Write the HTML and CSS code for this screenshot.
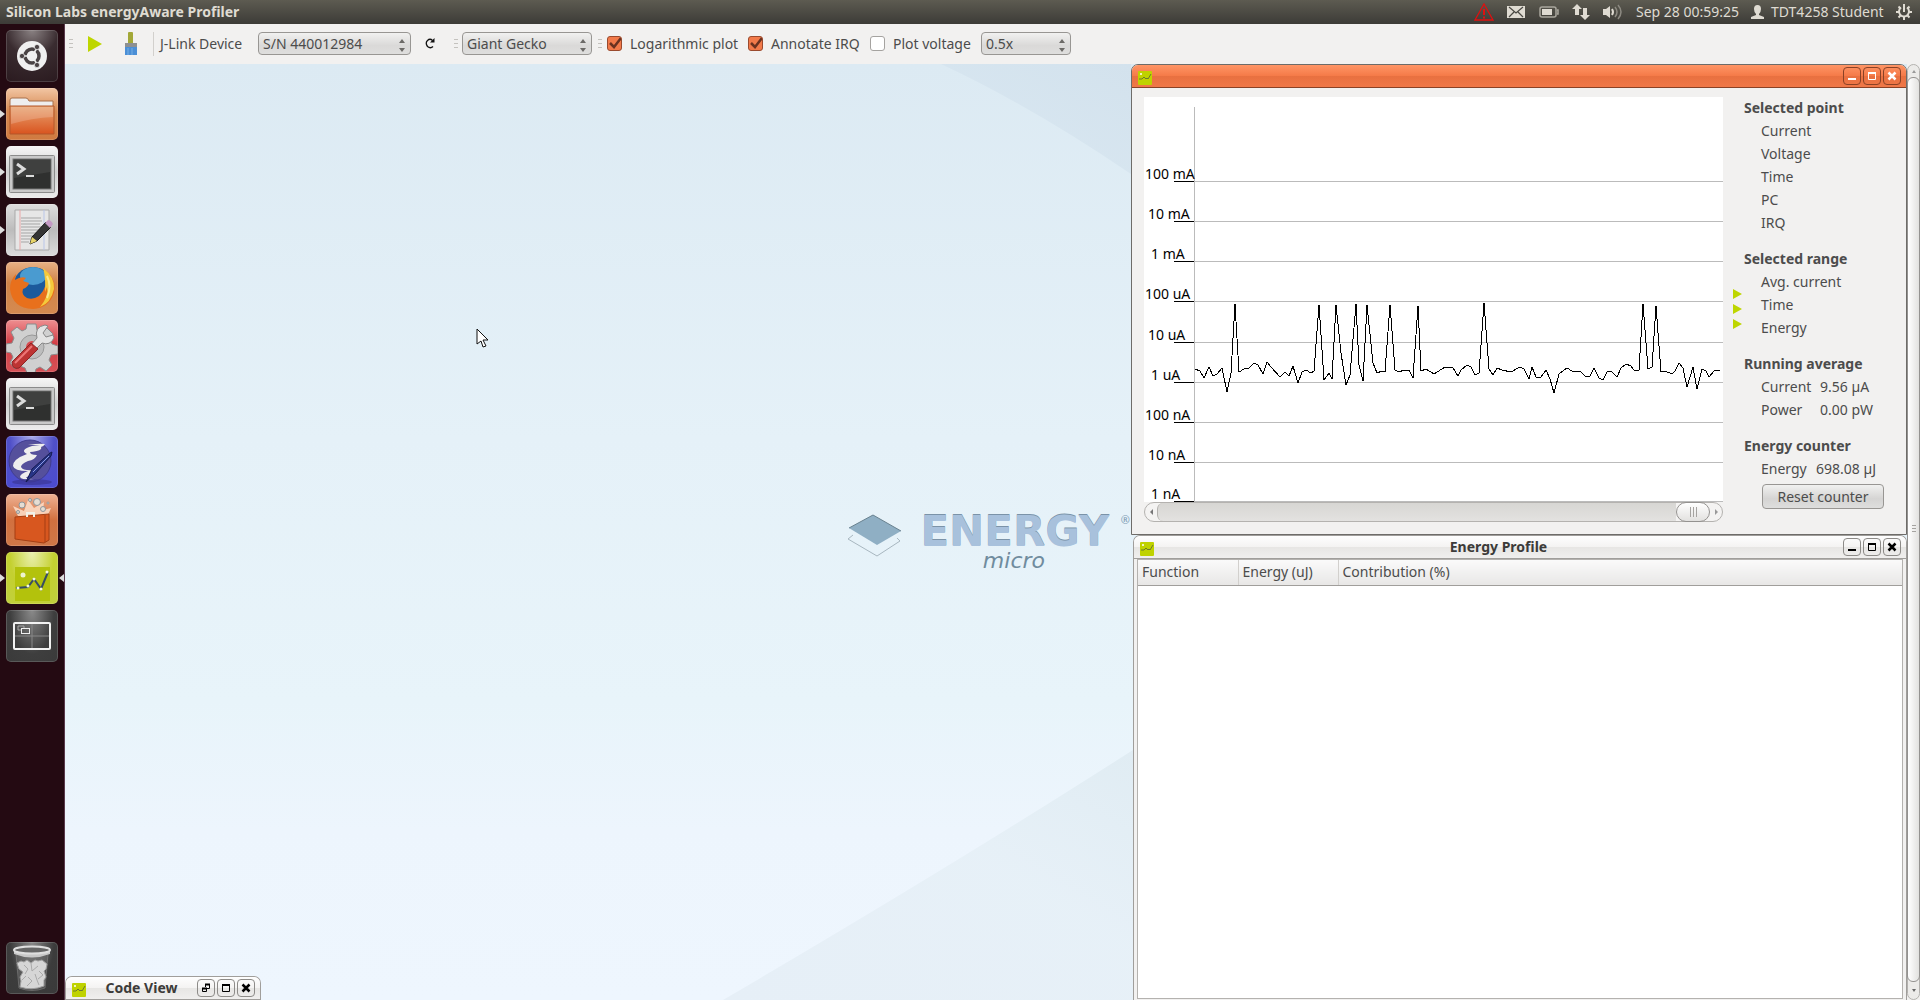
FILE: index.html
```html
<!DOCTYPE html>
<html lang="en">
<head>
<meta charset="utf-8">
<title>Silicon Labs energyAware Profiler</title>
<link rel="stylesheet" href="styles.css">
</head>
<body>
<svg class="defs" aria-hidden="true">
  <defs>
    <symbol id="app" viewBox="0 0 14 14">
      <rect width="14" height="14" rx="1" fill="#bfd200"/>
      <path d="M1 8h3l2-2 2 2 1-1 1 1 3-5" fill="none" stroke="#6b7a30"/>
      <circle cx="3" cy="3" r="1" fill="#fff"/>
    </symbol>
    <symbol id="min" viewBox="0 0 18 18"><path d="M5 12h8" stroke="currentColor" stroke-width="2"/></symbol>
    <symbol id="max" viewBox="0 0 18 18"><path d="M5 6h8" stroke="currentColor" stroke-width="2"/><path d="M5.500 5.500h7v7h-7z" fill="none" stroke="currentColor"/></symbol>
    <symbol id="restore" viewBox="0 0 18 18"><path d="M8 5.500h5M5 9.500h5" stroke="currentColor" stroke-width="2"/><path d="M8.500 8V5.500h4v4H10M5.500 9.500h4v3h-4z" fill="none" stroke="currentColor"/></symbol>
    <symbol id="close" viewBox="0 0 18 18"><path d="M5.500 5.500l7 7M12.500 5.500l-7 7" stroke="currentColor" stroke-width="2.500"/></symbol>
    <symbol id="updown" viewBox="0 0 6 13"><path d="M3 0l3 4H0zM3 13l3-4H0z" fill="#6c6a67"/></symbol>
    <linearGradient id="orange" x1="0" y1="0" x2="0" y2="1"><stop offset="0" stop-color="#e8a472"/><stop offset="1" stop-color="#d9541f"/></linearGradient>
    <symbol id="terminal" viewBox="0 0 52 52">
      <rect x="3.500" y="9.500" width="45" height="37" rx="1" fill="#c9c9c9" stroke="#8b8b8b"/>
      <rect x="7" y="13" width="38" height="30" fill="#2f302f" stroke="#777"/>
      <path d="M8 14h36v12L8 32z" fill="#fff" opacity=".08"/>
      <path d="M11 18l7 5-7 5" fill="none" stroke="#dcdcdc" stroke-width="3"/><path d="M20 30h8" stroke="#dcdcdc" stroke-width="2"/>
    </symbol>
    <symbol id="gear" viewBox="0 0 16 16">
      <path d="M5 3.500a5 5 0 1 0 6 0" fill="none" stroke="#dfdbd2" stroke-width="2"/>
      <path d="M8 0v8M2.500 2.500l2 2M13.500 2.500l-2 2M0 8h3M13 8h3M2.500 13.500l2-2M13.500 13.500l-2-2M8 13v3" stroke="#dfdbd2" stroke-width="2"/>
    </symbol>
  </defs>
</svg>

<header class="panel">
  <h1 class="panel-title">Silicon Labs energyAware Profiler</h1>
  <div class="indicators">
    <svg class="i-warn" width="20" height="18" viewBox="0 0 20 18"><path d="M10 1l9 16H1z" fill="none" stroke="#e01010" stroke-width="1.300"/><path d="M10 6v6M10 13.500v2" stroke="#e01010" stroke-width="2"/></svg>
    <svg class="i-mail" width="18" height="12" viewBox="0 0 18 12"><rect width="18" height="12" fill="#dfdbd2"/><path d="M2 1l7 6 7-6M2 11l5-5M16 11l-5-5" fill="none" stroke="#4a4943" stroke-width="1.200"/></svg>
    <svg class="i-batt" width="20" height="12" viewBox="0 0 20 12"><rect x="1" y="1" width="16" height="10" rx="2" fill="none" stroke="#a9a69d" stroke-width="1.500"/><rect x="3" y="3" width="10" height="6" fill="#dfdbd2"/><path d="M18 4h1v4h-1" fill="none" stroke="#a9a69d" stroke-width="1.500"/></svg>
    <svg class="i-net" width="18" height="18" viewBox="0 0 18 18"><path d="M5 1l5 5H7v6H3V6H0zM13 17l5-5h-3V5h-4v7H8z" fill="#dfdbd2"/></svg>
    <svg class="i-snd" width="20" height="18" viewBox="0 0 20 18"><path d="M0 6h3l4-3v12l-4-3H0z" fill="#dfdbd2"/><path d="M9 6q2 3 0 6" fill="none" stroke="#dfdbd2" stroke-width="2"/><path d="M12 4q4 5 0 10M15 2q6 7 0 14" fill="none" stroke="#8d8a82" stroke-width="1.500"/></svg>
    <time class="clock">Sep 28 00:59:25</time>
    <svg class="i-user" width="13" height="14" viewBox="0 0 13 14"><path d="M3 4q0-4 3.500-4T10 4q0 3-2 5v1l5 2v2H0v-2l5-2V9Q3 7 3 4z" fill="#dfdbd2"/></svg>
    <span class="user">TDT4258 Student</span>
    <svg width="16" height="16"><use href="#gear"/></svg>
  </div>
</header>

<div class="screen">
  <nav class="launcher" aria-label="Launcher">
    <a class="tile dash" href="#dash" aria-label="Dash"><svg viewBox="0 0 52 52"><circle cx="26" cy="26" r="15" fill="#f0f0f0"/><circle cx="26" cy="26" r="7" fill="none" stroke="#4a4345" stroke-width="3.500"/><path d="M26 26L17 26M26 26l5-8M26 26l5 8" stroke="#f0f0f0" stroke-width="1.500"/><g fill="#4a4345" stroke="#f0f0f0" stroke-width=".7"><circle cx="16" cy="26" r="2.600"/><circle cx="31" cy="17" r="2.600"/><circle cx="31" cy="35" r="2.600"/></g></svg></a>
    <a class="tile files running" href="#files" aria-label="Files"><svg viewBox="0 0 52 52"><path d="M4 19v-7q0-2 2-2h14q2 0 3 3h24v7z" fill="#eee" stroke="#a8714c"/><path d="M4 18h44v28H4z" fill="url(#orange)" stroke="#b3562a"/><path d="M5 19h42v10Q26 30 5 36z" fill="#fff" opacity=".18"/></svg></a>
    <a class="tile term running" href="#terminal-one" aria-label="Terminal"><svg><use href="#terminal"/></svg></a>
    <a class="tile edit running" href="#editor" aria-label="Text editor"><svg viewBox="0 0 52 52"><path d="M9 6h34v40H9z" fill="#e6e6e6" stroke="#a9a9a9"/><path d="M14 6v40" stroke="#e9a8a8"/><path d="M38 6v40" stroke="#b9c6e9"/><path d="M15 14h20M15 17h21M15 20h19M15 23h21M15 26h19M15 29h15M15 32h14M15 35h12M15 38h8" stroke="#a5a5a5"/><path d="M24 40l2-7L40 18l5 5-14 14z" fill="#343434" stroke="#151515"/><path d="M24 40l2-7 5 4z" fill="#e7d469"/><path d="M39 19l3-3q3 0 5 4l-3 4z" fill="#c49ac4"/></svg></a>
    <a class="tile fox" href="#firefox" aria-label="Firefox"><svg viewBox="0 0 52 52"><circle cx="27" cy="25" r="20" fill="#1c5a9c"/><ellipse cx="27" cy="14" rx="13" ry="9" fill="#4a9bd0"/><path d="M40 9q11 9 8 22-5 15-21 16Q6 46 4 27q0-9 6-15l-1 6q6-4 11-2l-3 3 6 2q-1 4-6 6-2 6 4 9 6 2 12-2 9-8 7-25z" fill="#e8701c"/><path d="M37 6q12 9 11 21-3 14-14 18 9-11 7-20l-2 5q1-14-2-24z" fill="#f4c93c"/><path d="M41 14q5 10 0 22" fill="none" stroke="#fbe98b" stroke-width="2"/></svg></a>
    <a class="tile settings" href="#settings" aria-label="System settings"><svg viewBox="0 0 52 52"><path d="M21 4h9l1 6 5 2 5-4 6 6-3 6 2 4 6 2v8l-7 1-2 5 3 5-6 6-6-4-4 2-1 4h-8l-2-5-5-2-5 3-5-6 3-6-2-4-5-1v-8l6-1 2-5-3-6 6-5 5 4 4-2z" fill="#d0d0d0" stroke="#8c8c8c"/><circle cx="26" cy="27" r="12" fill="#bdbdbd" stroke="#999"/><circle cx="26" cy="27" r="6" fill="#d94a50"/><path d="M24 26l7-8q-3-11 8-13l3 1-5 7 3 4 7-2 1 3q-4 8-12 5l-8 8z" fill="#e3e3e3" stroke="#888"/><path d="M6 42l19-19 7 6-19 19q-7 2-7-6z" fill="#bd3433" stroke="#8e2424"/><path d="M9 43l17-17" stroke="#e77" stroke-width="2"/></svg></a>
    <a class="tile term" href="#terminal-two" aria-label="Terminal"><svg><use href="#terminal"/></svg></a>
    <a class="tile emacs" href="#emacs" aria-label="Emacs"><svg viewBox="0 0 52 52"><circle cx="24" cy="25" r="21" fill="#55509c" stroke="#403c91"/><path d="M22 9q12-2 17-1-2 3-4 3 2 4-11 5 0 3 7 3-2 5-9 6-7 3-7 6 2 4 13 3l3 1-8 5q-6 2 0 2l5 2q-13 0-14-3 0-3 8-6-14 0-15-5 0-7 14-12-8-4 5-8l8-1z" fill="#eee"/><ellipse cx="26" cy="46" rx="20" ry="3" fill="#3a3697" opacity=".7"/><path d="M20 46l6-13L44 17l2-1-1 4-16 18z" fill="#273486" stroke="#151b50"/><path d="M27 36L43 20" stroke="#8c9be0"/></svg></a>
    <a class="tile shop" href="#software" aria-label="Software centre"><svg viewBox="0 0 52 52"><path d="M12 22L7 12l11 5 4-11 6 8 10-6-1 8 8-2-4 9z" fill="#ffe3d0" opacity=".8"/><g fill="#e5ddd3" stroke="#8f979c"><circle cx="16" cy="11" r="3"/><circle cx="31" cy="8" r="3.500"/><circle cx="24" cy="6" r="1.500"/><circle cx="37" cy="15" r="2.500"/><circle cx="12" cy="18" r="1.500"/><circle cx="42" cy="9" r="1"/></g><path d="M9 23l34-3v26l-5 3-29-4z" fill="#d8571f" stroke="#a53f14"/><path d="M39 21v27" stroke="#a53f14"/><path d="M21 23v-4h7v4" fill="none" stroke="#f0f0e8" stroke-width="2"/></svg></a>
    <a class="tile prof running active" href="#profiler" aria-label="energyAware Profiler" aria-current="page"><svg viewBox="0 0 52 52"><rect x="9" y="15" width="35" height="34" fill="#b3c20c"/><circle cx="17" cy="23" r="2.500" fill="#eef3d0"/><path d="M10 36l12-1 6-8 7 10 7-17" fill="none" stroke="#374d63" stroke-width="2"/><g fill="#f4f8dc"><circle cx="12" cy="36" r="1.500"/><circle cx="22" cy="34" r="1.500"/><circle cx="28" cy="27" r="1.500"/><circle cx="35" cy="37" r="1.500"/><circle cx="41" cy="20" r="1.500"/></g></svg></a>
    <a class="tile work" href="#workspaces" aria-label="Workspace switcher"><svg viewBox="0 0 52 52"><path d="M26 13v26M8 26h36" stroke="#888"/><rect x="8" y="13" width="36" height="26" rx="1" fill="none" stroke="#f2f2f2" stroke-width="2"/><path d="M15 20h-3v-4h6v2" fill="none" stroke="#aaa"/><rect x="15.500" y="18.500" width="8" height="5" fill="none" stroke="#eee"/></svg></a>
    <a class="tile trash" href="#trash" aria-label="Rubbish bin"><svg viewBox="0 0 52 52"><path d="M10 12l3 34q13 5 26 0l3-34z" fill="#777" opacity=".4" stroke="#aaa"/><path d="M11 21l4-2 3 1 3-2 4 3 4-3 3 1 4-1 5 4-1 5-2 2 2 6-2 3v6q-12 5-24 1l1-6-1-4 3-5-4-3z" fill="#d6d6d6" stroke="#9f9f9f"/><path d="M18 23l4 4-3 5M25 21l1 8 6-5M33 29l4 4-5 4M22 35l4 4-5 5M29 32l2 6 2 5M16 38l4-4" fill="none" stroke="#aaa"/><path d="M8 7v5q18 7 36 0V7z" fill="#c8c8c8"/><ellipse cx="26" cy="8" rx="18" ry="3.500" fill="#666" stroke="#dedede" stroke-width="2"/></svg></a>
  </nav>

  <main class="workspace">
    <form class="toolbar">
      <i class="grip"></i>
      <button class="tool play" type="button" aria-label="Start"><svg width="14" height="16" viewBox="0 0 14 16"><path d="M0 0l14 8-14 8z" fill="#bed600"/></svg></button>
      <button class="tool brush" type="button" aria-label="Clear"><svg width="14" height="24" viewBox="0 0 14 24"><rect x="4" width="5" height="12" rx="1" fill="#a3a838"/><rect x="1" y="11" width="12" height="4" fill="#8d9092"/><path d="M1 15h12v8H1z" fill="#4b8fd6"/><path d="M4 16v7M8 16v7" stroke="#76aee4"/></svg></button>
      <i class="divider"></i>
      <label class="device" for="serial">J-Link Device</label>
      <span class="combo combo-serial"><select id="serial"><option>S/N 440012984</option></select><svg><use href="#updown"/></svg></span>
      <button class="tool refresh" type="button" aria-label="Refresh"><svg width="10" height="11" viewBox="0 0 10 11"><path d="M7.500 2.500Q5 0 2.500 2.500T2.500 8.500q3 2.500 5.500 0" fill="none" stroke="#111" stroke-width="1.300"/><path d="M9.500 0v4.500H5z" fill="#111"/></svg></button>
      <i class="grip"></i>
      <span class="combo combo-chip"><select aria-label="Chip"><option>Giant Gecko</option></select><svg><use href="#updown"/></svg></span>
      <i class="grip grip-wide"></i>
      <label class="check check-log"><input type="checkbox" checked>Logarithmic plot</label>
      <label class="check check-irq"><input type="checkbox" checked>Annotate IRQ</label>
      <label class="check check-volt"><input type="checkbox">Plot voltage</label>
      <span class="combo combo-zoom"><select aria-label="Voltage scale"><option>0.5x</option></select><svg><use href="#updown"/></svg></span>
    </form>

    <div class="mdi">
      <div class="desk">
        <svg class="shape shape-top" viewBox="0 0 190 110" preserveAspectRatio="none"><defs><linearGradient id="st" x1="0" x2="1" y1="1" y2="0"><stop offset="0" stop-color="#d5e4ef" stop-opacity=".5"/><stop offset="1" stop-color="#d3e2ed"/></linearGradient></defs><path d="M0 0h190v110Q90 42 0 0z" fill="url(#st)"/></svg>
        <svg class="shape shape-bottom" viewBox="0 0 410 260" preserveAspectRatio="none"><defs><linearGradient id="sb" x1="0" y1="1" x2="1" y2="0"><stop offset="0" stop-color="#e6eff7"/><stop offset=".6" stop-color="#e5eff6" stop-opacity=".8"/><stop offset="1" stop-color="#e0ecf3"/></linearGradient></defs><path d="M410 0v260H0Q230 120 410 0z" fill="url(#sb)"/></svg>
        <div class="brand">
          <svg class="brand-mark" width="54" height="44" viewBox="0 0 54 44"><path d="M6 21l-5 4 29 17 23-15-3-3" fill="none" stroke="#a8b7c0"/><path d="M26 1l28 16-24 14L2 14z" fill="#8fafc4"/><path d="M2 14L26 1l28 16" fill="none" stroke="#68818f"/></svg>
          <div class="brand-text"><span class="brand-name">ENERGY</span><span class="brand-sub">micro</span></div>
          <span class="brand-reg">®</span>
        </div>

        <section class="win win-code">
          <header class="bar"><svg class="bar-icon"><use href="#app"/></svg><h2>Code View</h2>
            <button type="button" aria-label="Restore"><svg><use href="#restore"/></svg></button><button type="button" aria-label="Maximise"><svg><use href="#max"/></svg></button><button type="button" aria-label="Close"><svg><use href="#close"/></svg></button></header>
        </section>

        <section class="win win-plot">
          <header class="bar"><svg class="bar-icon"><use href="#app"/></svg><h2></h2>
            <button type="button" aria-label="Minimise"><svg><use href="#min"/></svg></button><button type="button" aria-label="Maximise"><svg><use href="#max"/></svg></button><button type="button" aria-label="Close"><svg><use href="#close"/></svg></button></header>
          <div class="plot-body">
            <div class="plot-col">
              <svg class="plot" viewBox="1144 97 579 405">
                <g shape-rendering="crispEdges" fill="none">
                  <path d="M1194 181.500h529M1194 221.500h529M1194 261.500h529M1194 301.500h529M1194 342.500h529M1194 382.500h529M1194 422.500h529M1194 462.500h529M1194 501.500h529M1194.500 107v394" stroke="#bbb"/>
                  <path d="M1174 181.500h20M1174 221.500h20M1174 261.500h20M1174 301.500h20M1174 342.500h20M1174 382.500h20M1174 422.500h20M1174 462.500h20M1174 501.500h20" stroke="#000"/>
                  <polyline stroke="#000" points="1195,369 1200,371 1204,378 1209,367 1213,376 1217,374 1222,368 1227,392 1231,373 1235,304 1239,372 1244,369 1249,368 1254,363 1258,365 1263,374 1267,362 1271,367 1280,377 1285,372 1289,376 1293,366 1298,383 1302,372 1306,370 1311,373 1314,371 1319,305 1324,380 1329,373 1332,379 1336,305 1341,353 1346,385 1350,375 1356,304 1359,365 1363,381 1367,305 1373,363 1377,373 1382,371 1385,372 1390,305 1395,370 1399,372 1404,370 1409,370 1413,378 1418,306 1421,371 1426,369 1434,374 1445,367 1453,368 1458,376 1461,370 1467,365 1471,367 1475,375 1479,373 1484,303 1489,369 1493,375 1497,368 1502,370 1511,372 1520,367 1524,369 1529,379 1532,367 1536,377 1541,377 1546,370 1550,379 1554,393 1559,374 1567,368 1572,371 1581,372 1586,377 1590,376 1594,368 1599,378 1603,380 1607,372 1611,371 1617,377 1621,368 1626,364 1631,366 1634,370 1639,370 1643,304 1648,369 1652,367 1656,306 1661,372 1665,371 1672,374 1675,371 1679,363 1683,368 1687,387 1693,367 1697,389 1702,369 1706,371 1709,377 1714,371 1720,370"/>
                </g>
                <g class="ticks">
                  <text x="1145" y="179">100 mA</text><text x="1148" y="219">10 mA</text><text x="1151" y="259">1 mA</text>
                  <text x="1145" y="299">100 uA</text><text x="1148" y="340">10 uA</text><text x="1151" y="380">1 uA</text>
                  <text x="1145" y="420">100 nA</text><text x="1148" y="460">10 nA</text><text x="1151" y="499">1 nA</text>
                </g>
              </svg>
              <div class="hscroll"><span class="arrow left"></span><span class="groove"></span><span class="thumb"><i></i></span><span class="arrow right"></span></div>
            </div>
            <div class="markers"><svg viewBox="0 0 9 40"><path d="M0 0l9 5-9 5zM0 15l9 5-9 5zM0 30l9 5-9 5z" fill="#bed600"/></svg></div>
            <aside class="stats">
              <section><h3>Selected point</h3><p>Current</p><p>Voltage</p><p>Time</p><p>PC</p><p>IRQ</p></section>
              <section><h3>Selected range</h3><p>Avg. current</p><p>Time</p><p>Energy</p></section>
              <section><h3>Running average</h3><p><span class="key">Current</span>9.56 µA</p><p><span class="key">Power</span>0.00 pW</p></section>
              <section><h3>Energy counter</h3><p><span class="key key-short">Energy</span>698.08 µJ</p><button class="reset" type="button">Reset counter</button></section>
            </aside>
          </div>
        </section>

        <section class="win win-profile">
          <header class="bar"><svg class="bar-icon"><use href="#app"/></svg><h2>Energy Profile</h2>
            <button type="button" aria-label="Minimise"><svg><use href="#min"/></svg></button><button type="button" aria-label="Maximise"><svg><use href="#max"/></svg></button><button type="button" aria-label="Close"><svg><use href="#close"/></svg></button></header>
          <div class="table-box">
            <table><thead><tr><th scope="col">Function</th><th scope="col">Energy (uJ)</th><th scope="col">Contribution (%)</th></tr></thead><tbody></tbody></table>
          </div>
        </section>

        <svg class="cursor" width="13" height="20" viewBox="0 0 13 20"><path d="M1 1v15l4-3 2 6 3-1-3-6h5z" fill="#fff" stroke="#111"/></svg>
      </div>
      <div class="vscroll"><span class="v-up"></span><span class="v-thumb"><i></i></span><span class="v-down"></span></div>
    </div>
  </main>
</div>
</body>
</html>
```
FILE: styles.css
```css
* { box-sizing: border-box; }
html, body { height: 100%; }
body {
  margin: 0;
  display: flex;
  flex-direction: column;
  overflow: hidden;
  font: 14px/20px "Noto Sans", "Open Sans", sans-serif;
  color: #4c4c4c;
  background: #f2f1f0;
}
h1, h2, h3, p { margin: 0; font-size: inherit; }
h1, h2, h3 { font-weight: 700; }
button { padding: 0; border: 0; background: none; font: inherit; color: inherit; }
svg { display: block; flex: none; }
.defs { position: absolute; width: 0; height: 0; }

/* top panel */
.panel {
  flex: none;
  height: 24px;
  padding: 0 8px 0 6px;
  display: flex;
  align-items: center;
  justify-content: space-between;
  color: #dfdbd2;
  background: linear-gradient(#5d5b51, #3c3b37);
}
.indicators { display: flex; align-items: center; gap: 13px; }
.i-batt { margin-left: 1px; }
.i-user { margin-right: -6px; }
.clock { width: 102px; white-space: nowrap; }
.user { width: 112px; white-space: nowrap; }

.screen { flex: 1; min-height: 0; display: flex; }

/* launcher */
.launcher {
  flex: none;
  width: 65px;
  padding: 6px;
  display: flex;
  flex-direction: column;
  gap: 6px;
  background: #240a12;
  border-right: 1px solid #5a3a4c;
}
.tile {
  position: relative;
  width: 52px;
  height: 52px;
  border-radius: 5px;
  box-shadow: inset 0 0 0 1px rgba(255, 255, 255, .15);
}
.tile svg { width: 52px; height: 52px; }
.tile.running::before, .tile.active::after {
  content: "";
  position: absolute;
  top: 22px;
  border: 4px solid transparent;
}
.tile.running::before { left: -6px; border-left: 5px solid #ddd; border-right: 0; }
.tile.active::after { right: -6px; border-right: 5px solid #ddd; border-left: 0; }
.dash { background: radial-gradient(circle at 50% 0, #8a8283, #3a2c30 45%, #2a1a1f); }
.files { background: linear-gradient(#f2c6a4, #d68850 45%, #d07a40); }
.term { background: linear-gradient(#f6f6f6, #cfcfcf 50%, #ececec); }
.edit { background: linear-gradient(#dedede, #bcbcbc 50%, #dcdcdc); }
.fox { background: linear-gradient(#e8b185, #d08348 40%, #d58a50); }
.settings { background: linear-gradient(#ee8e90, #d23e46 45%, #d75056); }
.emacs { background: radial-gradient(ellipse at 50% 0, #a8a8ea, #5050c8 60%, #4a4ad0); }
.shop { background: linear-gradient(#efb294, #d2703f 50%, #d07748); }
.prof { background: radial-gradient(ellipse at 50% 0, #eaf0b0, #c4d030 60%, #c0d040); }
.work { background: radial-gradient(ellipse at 50% 0, #8a8a8a, #3e3e3e 60%, #3a3a3a); }
.trash { margin-top: auto; background: radial-gradient(ellipse at 50% 0, #888, #3c3c3c 60%, #3a3a3a); }

/* toolbar */
.workspace { flex: 1; min-width: 0; display: flex; flex-direction: column; }
.toolbar {
  flex: none;
  height: 40px;
  padding: 0 4px 1px;
  display: flex;
  align-items: center;
}
.grip {
  flex: none;
  width: 4px;
  height: 9px;
  background: repeating-linear-gradient(#c4c2be 0 1px, transparent 1px 4px);
}
.grip-wide { margin: 0 5px 0 6px; }
.tool { flex: none; }
.play { margin-left: 15px; }
.brush { margin-left: 22px; }
.divider { width: 1px; height: 24px; margin: 0 6px 0 15px; background: #d2d0cd; }
.device { width: 98px; white-space: nowrap; }
.combo { position: relative; flex: none; height: 23px; }
.combo select {
  appearance: none;
  width: 100%;
  height: 100%;
  padding: 0 4px;
  border: 1px solid #989693;
  border-radius: 4px;
  font: inherit;
  line-height: 18px;
  color: #4c4c4c;
  background: linear-gradient(#f1f1f0, #dad9d8 60%, #dededd);
}
.combo svg { position: absolute; right: 6px; top: 7px; width: 6px; height: 13px; pointer-events: none; }
.combo-serial { width: 153px; }
.combo-chip { width: 130px; margin-left: 4px; }
.combo-zoom { width: 90px; }
.refresh { margin: 0 19px 0 14px; }
.check { display: flex; align-items: center; gap: 8px; white-space: nowrap; }
.check input {
  appearance: none;
  flex: none;
  width: 15px;
  height: 15px;
  margin: 0;
  border: 1px solid #a5a3a0;
  border-radius: 3px;
  background: #fff;
}
.check input:checked {
  border-color: #9a4a2e;
  background: #f27a4a url("data:image/svg+xml,%3Csvg xmlns='http://www.w3.org/2000/svg' viewBox='0 0 13 13'%3E%3Cpath d='M2 6l4 4 7-9' fill='none' stroke='%236b3220' stroke-width='2.500'/%3E%3C/svg%3E") center / 13px 13px;
}
.check-log { width: 141px; }
.check-irq { width: 122px; }
.check-volt { width: 111px; }

/* window area */
.mdi { flex: 1; min-height: 0; display: flex; }
.desk {
  position: relative;
  flex: 1;
  overflow: hidden;
  background: linear-gradient(#dceaf3, #e5f1f8 40%, #e8f4fa 68%, #edf5fd 82%, #eef6fe);
}
.shape { position: absolute; }
.shape-top { right: 776px; top: 0; width: 190px; height: 110px; }
.shape-bottom { right: 774px; bottom: 0; width: 410px; height: 250px; }
.brand {
  position: absolute;
  right: 777px;
  top: 450px;
  display: flex;
  align-items: flex-start;
  color: #a8c1dc;
}
.brand-text { width: 212px; margin-left: 8px; display: flex; flex-direction: column; }
.brand-name { font: bold 42px/36px "DejaVu Sans", sans-serif; text-align: center; text-shadow: 0 -1px 0 #7b93a8; }
.brand-sub { padding-left: 74px; font: italic 22px/22px "DejaVu Sans", sans-serif; color: #708c9e; }
.brand-reg { font-size: 11px; line-height: 12px; color: #7d9ab3; }
.cursor { position: absolute; left: 411px; top: 264px; }

.win { position: absolute; display: flex; flex-direction: column; border: 1px solid #6e6c69; border-radius: 7px 7px 0 0; background: #f2f1f0; }
.bar {
  flex: none;
  height: 23px;
  padding: 0 5px 0 6px;
  display: flex;
  align-items: center;
  gap: 2px;
  color: #3c3b39;
  border-bottom: 1px solid #a09e9b;
  border-radius: 6px 6px 0 0;
  background: linear-gradient(#fefefe, #f4f3f2 50%, #e7e6e4 52%, #f0efee);
}
.bar h2 { flex: 1; text-align: center; }
.bar-icon { width: 14px; height: 14px; margin-top: 4px; }
.bar button { flex: none; width: 18px; height: 18px; border: 1px solid #8d8b88; border-radius: 4px; color: #000; }
.bar button svg { width: 18px; height: 18px; margin: -1px; }

.win-code { left: 0; bottom: 0; width: 196px; border-bottom: 0; border-color: #a09e9b; }
.win-plot { right: 0; top: 0; width: 776px; height: 471px; }
.win-plot .bar { color: #fff; border-color: #8a4226; background: linear-gradient(#ff9566, #f57b49 48%, #e87040 50%, #f07848); }
.win-plot .bar button { border-color: #8a4226; color: #fff; }
.win-profile { right: 0; top: 471px; bottom: 0; width: 774px; border-color: #a09e9b; border-bottom: 0; }

/* plot */
.plot-body { flex: 1; padding: 8px 0 12px 12px; display: flex; }
.plot-col { width: 579px; padding-top: 1px; }
.plot { width: 100%; height: 405px; background: #fff; }
.ticks { font: 14px "Noto Sans", sans-serif; fill: #000; }
.hscroll {
  height: 20px;
  display: flex;
  border: 1px solid #b4b2af;
  border-radius: 10px;
  background: #f4f3f2;
}
.arrow { width: 12px; display: flex; align-items: center; justify-content: center; }
.arrow::before { content: ""; border: 3px solid transparent; }
.left::before { border-right-color: #777; border-left: 0; }
.right::before { border-left-color: #999; border-right: 0; }
.groove { flex: 1; border-left: 1px solid #b4b2af; border-radius: 6px 0 0 6px; background: linear-gradient(#d7d6d3, #e3e2e0); }
.thumb, .v-thumb { display: flex; align-items: center; justify-content: center; border: 1px solid #949290; }
.thumb { width: 34px; margin: -1px 0; border-radius: 10px; background: linear-gradient(#fff, #e2e1df); }
.thumb i { width: 7px; height: 10px; background: repeating-linear-gradient(90deg, #a5a3a0 0 1px, transparent 1px 3px); }
.markers { width: 21px; padding: 193px 0 0 10px; }
.markers svg { width: 9px; height: 40px; }
.stats { line-height: 23px; }
.stats section { margin-bottom: 13px; }
.stats section:last-child { margin: 0; }
.stats p { padding-left: 17px; white-space: nowrap; }
.key { display: inline-block; width: 59px; }
.key-short { width: 55px; }
.reset {
  width: 122px;
  height: 25px;
  margin: 4px 0 0 18px;
  border: 1px solid #989693;
  border-radius: 4px;
  background: linear-gradient(#f1f1f0, #d5d4d3 60%, #dededd);
}

/* profile table */
.table-box { flex: 1; margin: 0 3px 1px; border: 1px solid #b4b2af; background: #fff; }
table { width: 100%; table-layout: fixed; border-collapse: collapse; }
th {
  height: 25px;
  padding: 0 4px;
  text-align: left;
  font-weight: 400;
  line-height: 20px;
  border-right: 1px solid #d2d0cd;
  border-bottom: 1px solid #a09e9b;
  background: linear-gradient(#fafafa, #e8e7e6);
}
th:nth-child(-n+2) { width: 100px; }
th:last-child { border-right: 0; }

.vscroll { flex: none; width: 13px; display: flex; flex-direction: column; background: #ecebe9; border: 1px solid #b4b2af; border-radius: 7px; }
.v-up, .v-down { display: flex; align-items: center; justify-content: center; }
.v-up { height: 12px; }
.v-down { height: 17px; }
.v-up::before, .v-down::before { content: ""; border: 2px solid transparent; }
.v-up::before { border-bottom: 3px solid #999; border-top: 0; }
.v-down::before { border-top: 3px solid #666; border-bottom: 0; }
.v-thumb { flex: 1; margin: 0 -1px; border-radius: 6px; background: linear-gradient(90deg, #fff, #e2e1df); }
.v-thumb i { width: 4px; height: 9px; background: repeating-linear-gradient(#a5a3a0 0 1px, transparent 1px 3px); }
```
